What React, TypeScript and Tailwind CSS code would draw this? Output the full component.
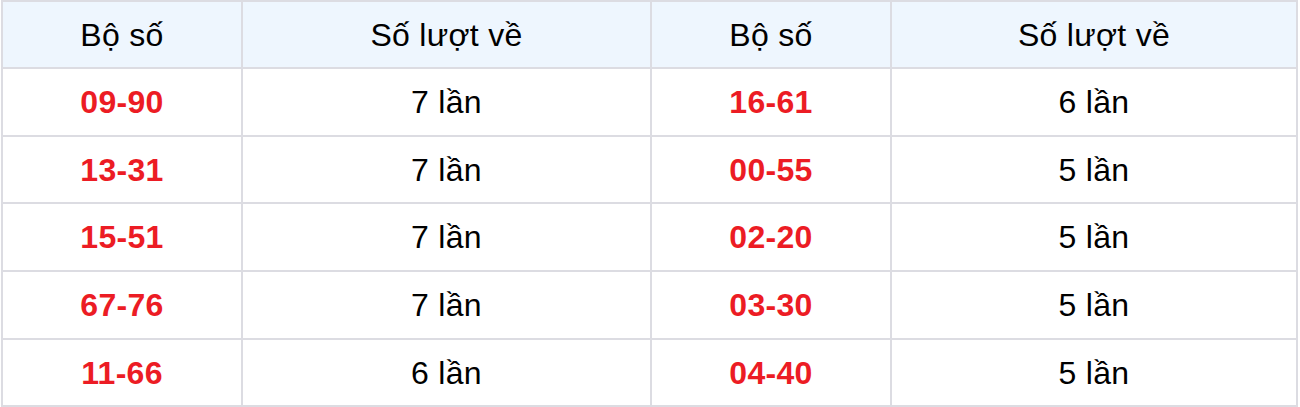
import React from 'react';

interface Pair {
  pair: string;
  count: number;
}

const left: Pair[] = [
  { pair: '09-90', count: 7 },
  { pair: '13-31', count: 7 },
  { pair: '15-51', count: 7 },
  { pair: '67-76', count: 7 },
  { pair: '11-66', count: 6 },
];

const right: Pair[] = [
  { pair: '16-61', count: 6 },
  { pair: '00-55', count: 5 },
  { pair: '02-20', count: 5 },
  { pair: '03-30', count: 5 },
  { pair: '04-40', count: 5 },
];

const rowHeights = ['h-[66px]', 'h-[65px]', 'h-[66px]', 'h-[66px]', 'h-[65px]'];

const App: React.FC = () => {
  return (
    <div className="bg-white w-[1300px] h-[407px]" style={{ fontFamily: '"Liberation Sans", Arial, sans-serif' }}>
      <div className="ml-[1px] w-[1297px] bg-[#dcdce2] p-[2px] grid grid-cols-[238px_407px_238px_404px] gap-[2px] text-[32px] tracking-[0.3px] text-black">
        {/* Header */}
        {['Bộ số', 'Số lượt về', 'Bộ số', 'Số lượt về'].map((h, i) => (
          <div key={i} className="h-[65px] bg-[#eef6fe] flex items-center justify-center">
            {h}
          </div>
        ))}

        {/* Rows */}
        {left.map((l, i) => {
          const r = right[i];
          return (
            <React.Fragment key={l.pair}>
              <div className={`${rowHeights[i]} bg-white flex items-center justify-center font-bold text-[#ec1c24]`}>
                {l.pair}
              </div>
              <div className={`${rowHeights[i]} bg-white flex items-center justify-center`}>
                {l.count} lần
              </div>
              <div className={`${rowHeights[i]} bg-white flex items-center justify-center font-bold text-[#ec1c24]`}>
                {r.pair}
              </div>
              <div className={`${rowHeights[i]} bg-white flex items-center justify-center`}>
                {r.count} lần
              </div>
            </React.Fragment>
          );
        })}
      </div>
    </div>
  );
};

export default App;
